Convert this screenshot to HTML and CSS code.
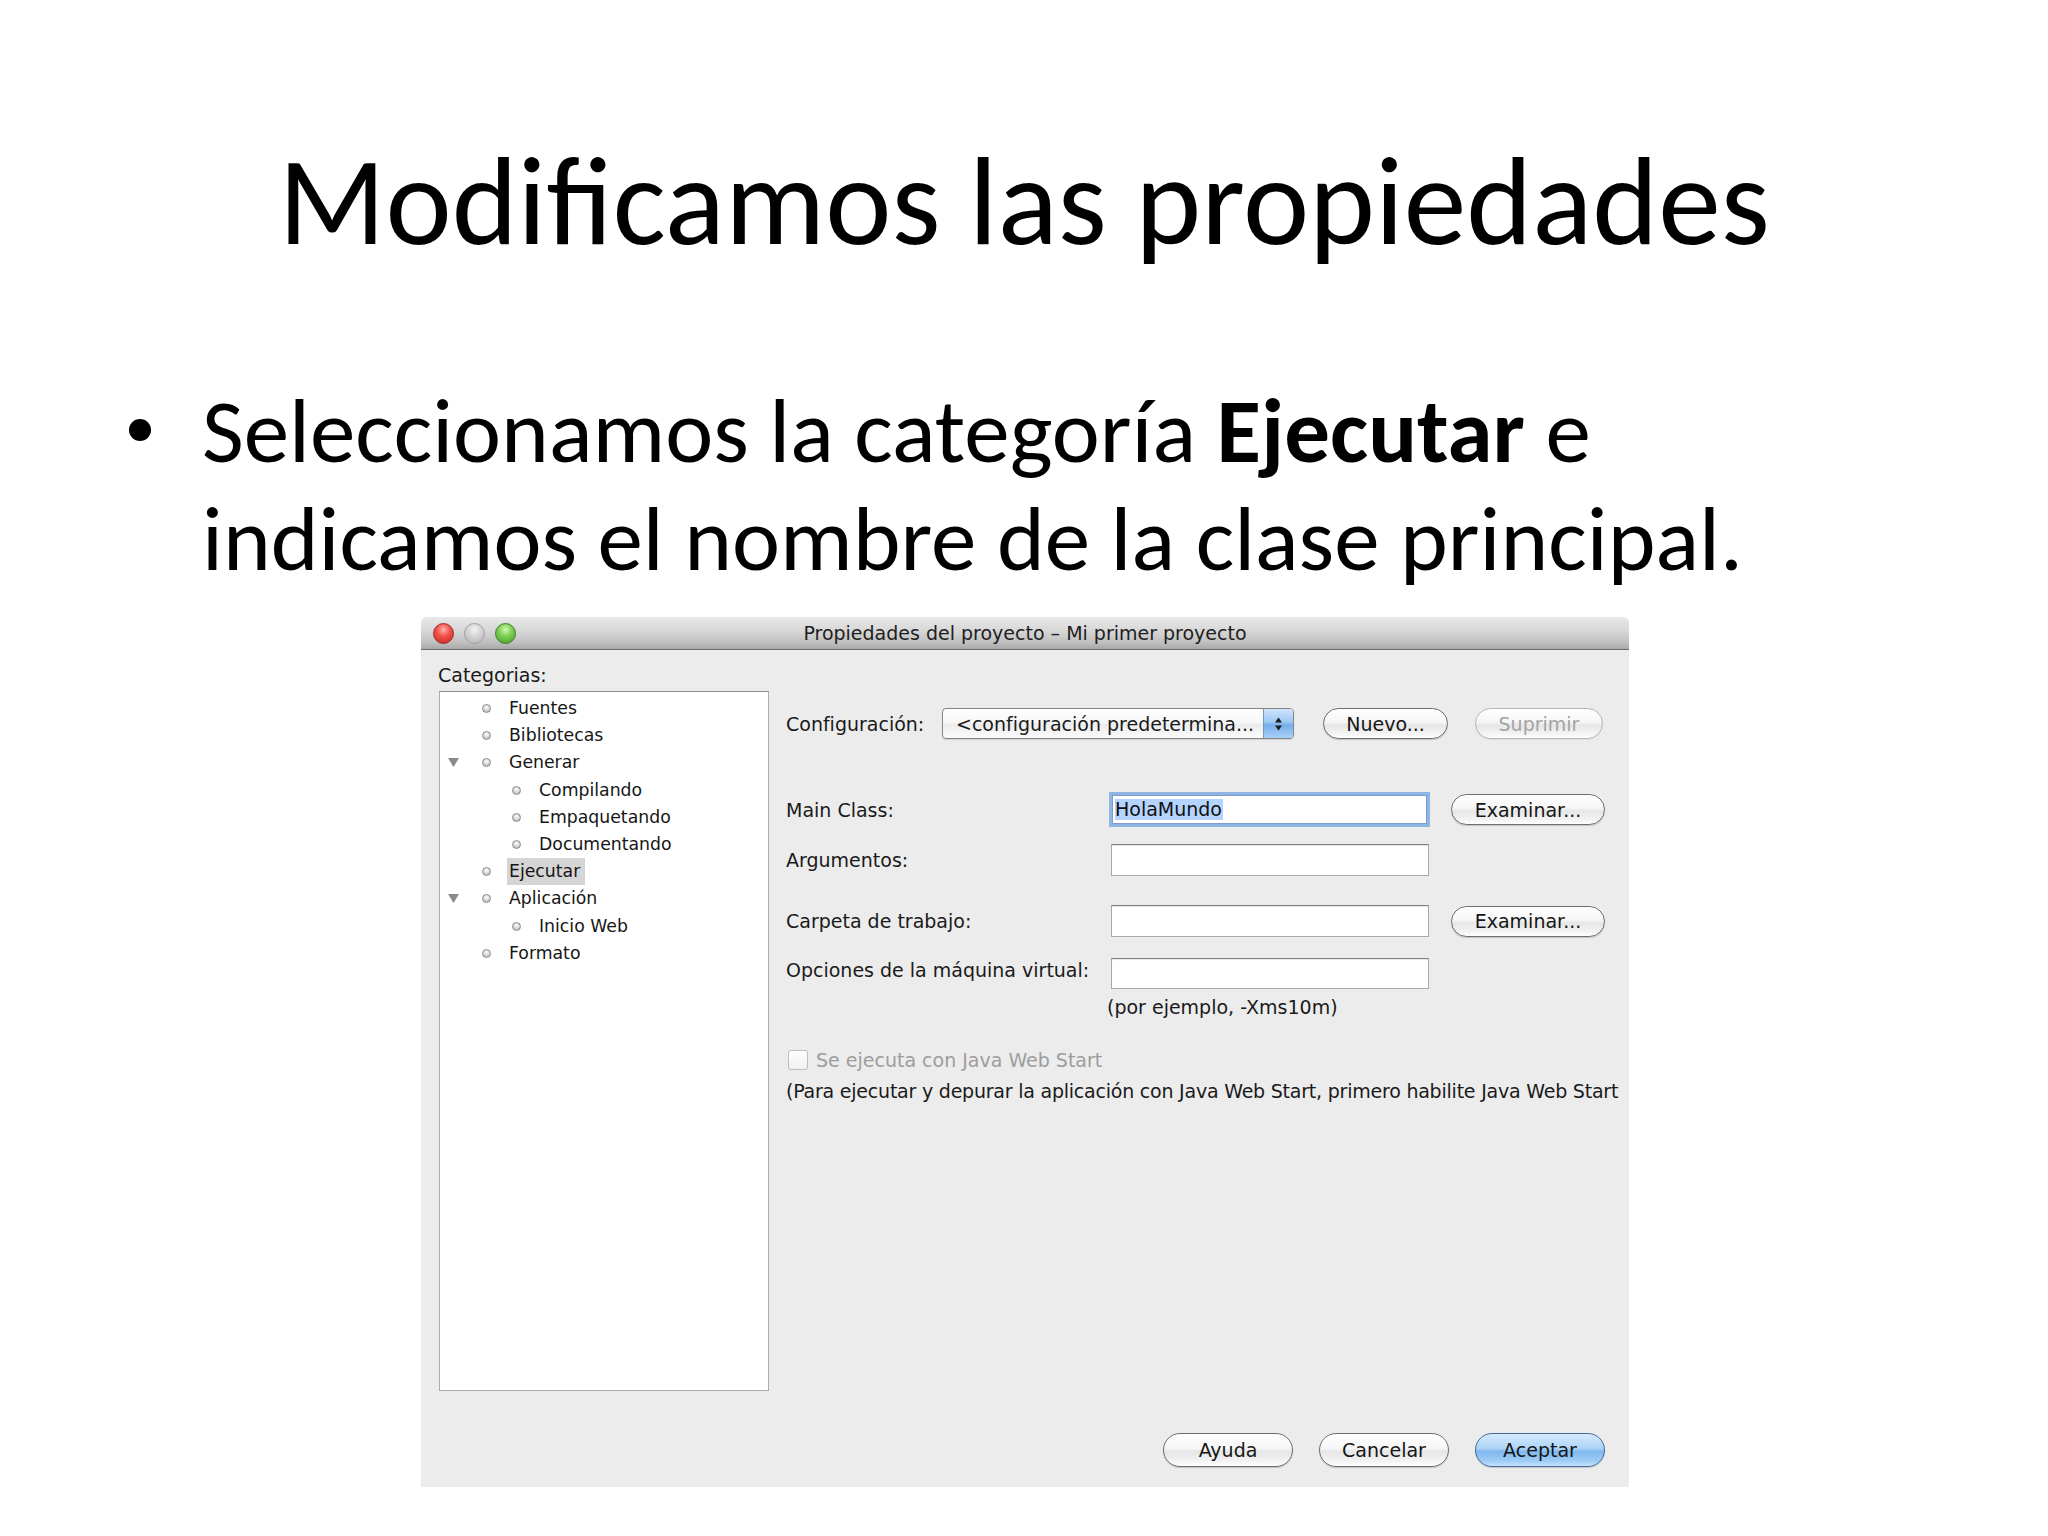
FILE: index.html
```html
<!DOCTYPE html>
<html lang="es">
<head>
<meta charset="utf-8">
<title>Modificamos las propiedades</title>
<link rel="stylesheet" href="styles.css">
</head>
<body>
<div class="slide">
  <h1 class="title">Modificamos las propiedades</h1>
  <div class="bullet-row">
    <span class="dot"></span>
    <p class="bullet-text">Seleccionamos la categoría <b>Ejecutar</b> e<br>indicamos el nombre de la clase principal.</p>
  </div>

  <div class="dialog">
    <div class="titlebar">
      <div class="lights">
        <span class="light red"></span>
        <span class="light gray"></span>
        <span class="light green"></span>
      </div>
      <div class="wtitle">Propiedades del proyecto – Mi primer proyecto</div>
      <div></div>
    </div>
    <div class="dbody">
      <div class="main">
        <div class="left">
          <div class="cat-label">Categorias:</div>
          <div class="tree">
            <div class="row"><span class="twisty"></span><span class="node"></span><span class="txt">Fuentes</span></div>
            <div class="row"><span class="twisty"></span><span class="node"></span><span class="txt">Bibliotecas</span></div>
            <div class="row"><span class="twisty"><svg width="11" height="9" viewBox="0 0 11 9"><polygon points="0,0 11,0 5.5,9" fill="#8a8a8a"/></svg></span><span class="node"></span><span class="txt">Generar</span></div>
            <div class="row"><span class="twisty"></span><span class="indent"></span><span class="node"></span><span class="txt">Compilando</span></div>
            <div class="row"><span class="twisty"></span><span class="indent"></span><span class="node"></span><span class="txt">Empaquetando</span></div>
            <div class="row"><span class="twisty"></span><span class="indent"></span><span class="node"></span><span class="txt">Documentando</span></div>
            <div class="row"><span class="twisty"></span><span class="node"></span><span class="txt sel">Ejecutar</span></div>
            <div class="row"><span class="twisty"><svg width="11" height="9" viewBox="0 0 11 9"><polygon points="0,0 11,0 5.5,9" fill="#8a8a8a"/></svg></span><span class="node"></span><span class="txt">Aplicación</span></div>
            <div class="row"><span class="twisty"></span><span class="indent"></span><span class="node"></span><span class="txt">Inicio Web</span></div>
            <div class="row"><span class="twisty"></span><span class="node"></span><span class="txt">Formato</span></div>
          </div>
        </div>

        <div class="right">
          <div class="frow r-config">
            <span class="lbl w-config">Configuración:</span>
            <div class="combo">
              <span class="combo-text">&lt;configuración predetermina...</span>
              <span class="combo-arrow">
                <svg width="9" height="14" viewBox="0 0 9 14"><polygon points="1,5.5 8,5.5 4.5,0.5" fill="#1b1b1b"/><polygon points="1,8.5 8,8.5 4.5,13.5" fill="#1b1b1b"/></svg>
              </span>
            </div>
            <span class="btn b-nuevo">Nuevo...</span>
            <span class="btn disabled b-suprimir">Suprimir</span>
          </div>

          <div class="frow r-main">
            <span class="lbl w-main">Main Class:</span>
            <div class="field focus"><span class="selected">HolaMundo</span></div>
            <span class="btn b-exam">Examinar...</span>
          </div>

          <div class="frow r-args">
            <span class="lbl w-field">Argumentos:</span>
            <div class="field"></div>
          </div>

          <div class="frow r-dir">
            <span class="lbl w-field">Carpeta de trabajo:</span>
            <div class="field"></div>
            <span class="btn b-exam2">Examinar...</span>
          </div>

          <div class="frow r-vm">
            <span class="lbl w-field">Opciones de la máquina virtual:</span>
            <div class="field"></div>
          </div>

          <div class="hint">(por ejemplo, -Xms10m)</div>

          <div class="frow r-check">
            <span class="checkbox"></span>
            <span class="check-lbl">Se ejecuta con Java Web Start</span>
          </div>

          <div class="note">(Para ejecutar y depurar la aplicación con Java Web Start, primero habilite Java Web Start</div>
        </div>
      </div>

      <div class="footer">
        <span class="btn fbtn">Ayuda</span>
        <span class="btn fbtn">Cancelar</span>
        <span class="btn fbtn default">Aceptar</span>
      </div>
    </div>
  </div>
</div>
</body>
</html>
```

FILE: styles.css
```css
html, body {
  margin: 0;
  padding: 0;
  background: #ffffff;
}

.slide {
  width: 2048px;
  height: 1536px;
  background: #ffffff;
  overflow: hidden;
  color: #000000;
  font-family: Carlito, Lato, "Liberation Sans", sans-serif;
}

.title {
  margin: 0;
  padding-top: 140px;
  height: 124px;
  font-size: 125.5px;
  line-height: 124px;
  font-weight: normal;
  text-align: center;
  white-space: nowrap;
}

.bullet-row {
  display: flex;
  align-items: flex-start;
  margin-top: 113px;
  padding-left: 129px;
}

.dot {
  width: 22px;
  height: 22px;
  border-radius: 50%;
  background: #000;
  margin-top: 42px;
  flex: none;
}

.bullet-text {
  margin: 0 0 0 51px;
  font-size: 91px;
  line-height: 108px;
  white-space: nowrap;
}

.bullet-text b {
  font-weight: bold;
}

/* ---------- dialog ---------- */
.dialog {
  margin-top: 24px;
  margin-left: 421px;
  width: 1208px;
  height: 870px;
  background: #ececec;
  border-radius: 6px 6px 0 0;
  overflow: hidden;
  font-family: "DejaVu Sans", "Liberation Sans", sans-serif;
  font-size: 19px;
  color: #1a1a1a;
}

.titlebar {
  height: 32px;
  border-bottom: 1px solid #6c6c6c;
  background: linear-gradient(#e9e9e9 0%, #d6d6d6 45%, #bfbfbf 80%, #a8a8a8 100%);
  display: grid;
  grid-template-columns: 1fr auto 1fr;
  align-items: center;
}

.lights {
  display: flex;
  align-items: center;
  gap: 10px;
  padding-left: 12px;
}

.light {
  width: 21px;
  height: 21px;
  border-radius: 50%;
  box-sizing: border-box;
}

.light.red {
  background: radial-gradient(circle at 50% 30%, #ffb3ad 0%, #f2544c 40%, #c8201a 100%);
  border: 1px solid #9c2b26;
}

.light.gray {
  background: radial-gradient(circle at 50% 30%, #f4f4f4 0%, #d2d2d2 45%, #b4b4b4 100%);
  border: 1px solid #a2a2a2;
}

.light.green {
  background: radial-gradient(circle at 50% 30%, #d4f7b4 0%, #7fcf55 40%, #3f9a25 100%);
  border: 1px solid #3c7f27;
}

.wtitle {
  font-size: 19px;
  line-height: 32px;
  color: #1e1e1e;
  white-space: nowrap;
}

.dbody {
  height: 837px;
  box-sizing: border-box;
  padding: 0 24px 20px 17px;
  display: flex;
  flex-direction: column;
}

.main {
  display: flex;
  align-items: flex-start;
}

.left {
  width: 331px;
  padding-top: 14px;
  flex: none;
}

.cat-label {
  line-height: 22px;
  height: 22px;
}

.tree {
  margin-top: 5px;
  margin-left: 1px;
  width: 330px;
  height: 700px;
  box-sizing: border-box;
  border: 1px solid #ababab;
  border-top-color: #8d8d8d;
  background: #ffffff;
  padding-top: 3px;
}

.row {
  height: 27.2px;
  display: flex;
  align-items: center;
  font-size: 17.3px;
  color: #161616;
}

.twisty {
  width: 26px;
  flex: none;
  display: flex;
  justify-content: center;
  align-items: center;
}

.indent {
  width: 30px;
  flex: none;
}

.node {
  width: 9px;
  height: 9px;
  box-sizing: border-box;
  border-radius: 50%;
  margin-left: 16px;
  border: 1px solid #8c8c8c;
  background: radial-gradient(circle at 50% 35%, #ffffff 0%, #d6d6d6 50%, #a9a9a9 100%);
  flex: none;
}

.txt {
  margin-left: 18px;
  line-height: 27px;
  white-space: nowrap;
}

.txt.sel {
  background: #d5d5d5;
  margin-left: 16px;
  padding: 0 5px 0 2px;
}

/* right side */
.right {
  margin-left: 17px;
  padding-top: 58px;
  width: 819px;
  flex: none;
  display: flex;
  flex-direction: column;
}

.frow {
  display: flex;
  align-items: center;
}

.lbl {
  flex: none;
  white-space: nowrap;
  line-height: 22px;
}

.w-config { width: 156px; }
.w-main { width: 323px; }
.w-field { width: 325px; }

.r-config { height: 31px; }
.r-main { height: 35px; margin-top: 53px; }
.r-args { height: 32px; margin-top: 17px; }
.r-dir { height: 32px; margin-top: 29px; }
.r-vm { height: 31px; margin-top: 21px; }
.r-vm .lbl { margin-bottom: 8px; }
.r-check { height: 22px; margin-top: 31px; }

.combo {
  width: 352px;
  height: 31px;
  box-sizing: border-box;
  border: 1px solid #858585;
  border-radius: 4px;
  background: linear-gradient(#ffffff 0%, #f7f7f7 48%, #ececec 52%, #fbfbfb 100%);
  display: flex;
  align-items: center;
  overflow: hidden;
  flex: none;
  box-shadow: 0 1px 1px rgba(0,0,0,0.12);
}

.combo-text {
  flex: 1;
  padding-left: 13px;
  white-space: nowrap;
}

.combo-arrow {
  width: 30px;
  height: 100%;
  box-sizing: border-box;
  border-left: 1px solid #7c95bb;
  background: linear-gradient(#cfe4fb 0%, #9ec8f3 45%, #76adea 55%, #a7d1f7 100%);
  display: flex;
  align-items: center;
  justify-content: center;
}

.btn {
  flex: none;
  box-sizing: border-box;
  height: 31px;
  border: 1px solid #6e6e6e;
  border-radius: 16px;
  background: linear-gradient(#ffffff 0%, #f6f6f6 45%, #e6e6e6 55%, #f3f3f3 85%, #ffffff 100%);
  box-shadow: 0 1px 1px rgba(0,0,0,0.18);
  display: flex;
  align-items: center;
  justify-content: center;
  white-space: nowrap;
  color: #161616;
}

.btn.disabled {
  color: #a4a4a4;
  border-color: #b5b5b5;
  box-shadow: 0 1px 1px rgba(0,0,0,0.06);
}

.b-nuevo { width: 125px; margin-left: 29px; }
.b-suprimir { width: 128px; margin-left: 27px; }
.b-exam { width: 154px; margin-left: 21px; }
.b-exam2 { width: 154px; margin-left: 22px; }

.field {
  flex: none;
  width: 318px;
  height: 32px;
  box-sizing: border-box;
  background: #ffffff;
  border: 1px solid #a9a9a9;
  border-top-color: #7f7f7f;
  box-shadow: inset 0 1px 1px rgba(0,0,0,0.1);
}

.r-vm .field { height: 31px; }

.field.focus {
  width: 315px;
  height: 29px;
  margin: 3px;
  border-color: #7d9cc6;
  box-shadow: 0 0 0 3px #8fb5e5;
  display: flex;
  align-items: center;
  padding-left: 2px;
}

.selected {
  background: #b5d4fd;
  line-height: 21px;
  padding-right: 1px;
  color: #111;
}

.hint {
  margin-top: 7px;
  height: 22px;
  line-height: 22px;
  padding-left: 321px;
  white-space: nowrap;
}

.checkbox {
  width: 20px;
  height: 20px;
  box-sizing: border-box;
  margin-left: 2px;
  border: 1px solid #bdbdbd;
  border-radius: 3px;
  background: linear-gradient(#ffffff, #f0f0f0);
  flex: none;
}

.check-lbl {
  margin-left: 8px;
  color: #9d9d9d;
  white-space: nowrap;
  line-height: 22px;
}

.note {
  margin-top: 9px;
  height: 22px;
  line-height: 22px;
  white-space: nowrap;
  letter-spacing: -0.22px;
}

.footer {
  margin-top: 42px;
  display: flex;
  justify-content: flex-end;
  gap: 26px;
}

.fbtn {
  width: 130px;
  height: 34px;
  border-radius: 17px;
}

.fbtn.default {
  border-color: #48699a;
  background: linear-gradient(#d6ebfd 0%, #acd3f7 45%, #80b8ee 55%, #9fcdf7 85%, #c6e4ff 100%);
}
```
